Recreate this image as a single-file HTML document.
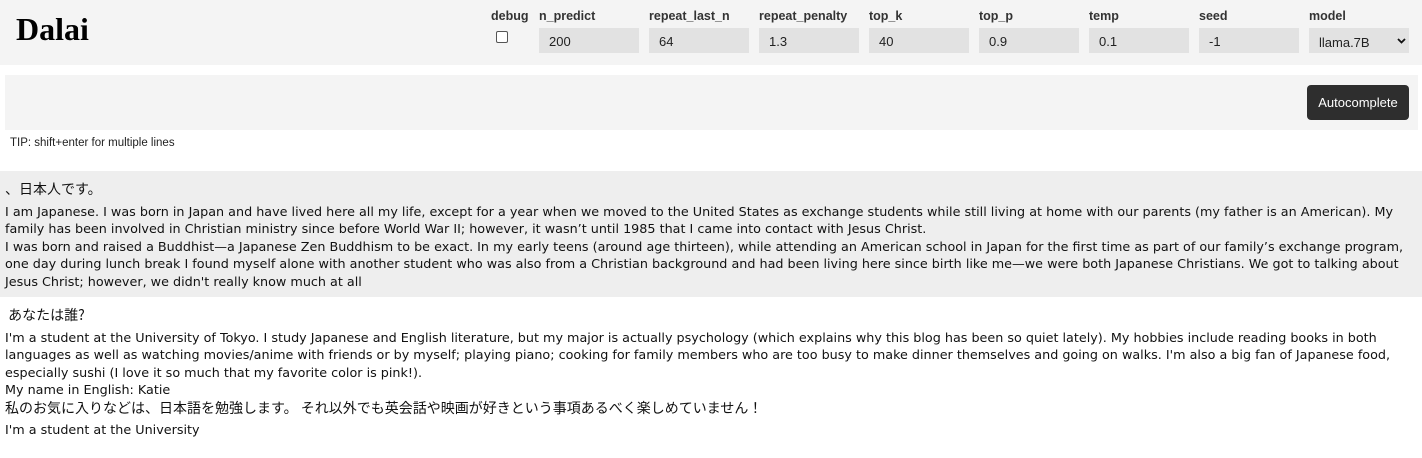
<!DOCTYPE html>
<html><head><meta charset="utf-8"><style>
*{box-sizing:border-box;margin:0;padding:0}
body{width:1422px;height:458px;background:#fff;font-family:"Liberation Sans","Noto Sans CJK JP",sans-serif;color:#111;position:relative;overflow:hidden}
.hdr{position:absolute;left:0;top:0;width:1422px;height:65px;background:#f4f4f4}
.logo{position:absolute;left:16px;top:11px;font-family:"Liberation Serif",serif;font-weight:bold;font-size:32px;color:#000;letter-spacing:0}
.f{position:absolute;top:9px}
.f label{display:block;font-size:12.5px;font-weight:bold;color:#333;height:19px}
.f .in{width:100px;height:25px;background:#e2e2e2;font-size:13px;padding:6px 0 0 10px;color:#222}
.cb{position:absolute;left:496px;top:31px;width:12px;height:12px;border:1px solid #555;border-radius:2px;background:#fff}
.prompt{position:absolute;left:5px;top:75px;width:1413px;height:55px;background:#f4f4f4}
.btn{position:absolute;left:1307px;top:85px;width:102px;height:35px;background:#2e2e2e;border-radius:4px;color:#fff;font-size:13px;text-align:center;line-height:35px}
.tip{position:absolute;left:10px;top:137px;font-size:11.5px;color:#222}
.r{position:absolute;left:0;width:1422px;font-family:"DejaVu Sans","Noto Sans CJK JP",sans-serif;font-size:12.75px;line-height:17.5px;white-space:nowrap;padding-left:5px;color:#111}
.r1{top:171px;height:126px;background:#eee;padding-top:10px}
.r2{top:297px;padding-top:10px}
.j{display:block;margin-bottom:5px;font-family:"Noto Sans CJK JP",sans-serif;font-size:14px}
</style></head><body>
<div class="hdr">
<div class="logo">Dalai</div>
<div class="f" style="left:491px"><label>debug</label></div>
<div class="cb"></div>
<div class="f" style="left:539px"><label>n_predict</label><div class="in">200</div></div>
<div class="f" style="left:649px"><label>repeat_last_n</label><div class="in">64</div></div>
<div class="f" style="left:759px"><label>repeat_penalty</label><div class="in">1.3</div></div>
<div class="f" style="left:869px"><label>top_k</label><div class="in">40</div></div>
<div class="f" style="left:979px"><label>top_p</label><div class="in">0.9</div></div>
<div class="f" style="left:1089px"><label>temp</label><div class="in">0.1</div></div>
<div class="f" style="left:1199px"><label>seed</label><div class="in">-1</div></div>
<div class="f" style="left:1309px"><label>model</label><div class="in" style="padding-top:7px;position:relative">llama.7B <svg style="position:absolute;left:88px;top:10px" width="9" height="6" viewBox="0 0 9 6"><path d="M1 1L4.5 4.5L8 1" stroke="#111" stroke-width="1.8" fill="none"/></svg></div></div>
</div>
<div class="prompt"></div>
<div class="btn">Autocomplete</div>
<div class="tip">TIP: shift+enter for multiple lines</div>
<div class="r r1"><span class="j">、日本人です。</span>I am Japanese. I was born in Japan and have lived here all my life, except for a year when we moved to the United States as exchange students while still living at home with our parents (my father is an American). My<br>family has been involved in Christian ministry since before World War II; however, it wasn’t until 1985 that I came into contact with Jesus Christ.<br>I was born and raised a Buddhist—a Japanese Zen Buddhism to be exact. In my early teens (around age thirteen), while attending an American school in Japan for the first time as part of our family’s exchange program,<br>one day during lunch break I found myself alone with another student who was also from a Christian background and had been living here since birth like me—we were both Japanese Christians. We got to talking about<br>Jesus Christ; however, we didn't really know much at all</div>
<div class="r r2"><span class="j">&nbsp;あなたは誰?</span>I'm a student at the University of Tokyo. I study Japanese and English literature, but my major is actually psychology (which explains why this blog has been so quiet lately). My hobbies include reading books in both<br>languages as well as watching movies/anime with friends or by myself; playing piano; cooking for family members who are too busy to make dinner themselves and going on walks. I'm also a big fan of Japanese food,<br>especially sushi (I love it so much that my favorite color is pink!).<br>My name in English: Katie<br><span class="j">私のお気に入りなどは、日本語を勉強します。 それ以外でも英会話や映画が好きという事項あるべく楽しめていません！</span>I'm a student at the University</div>
</body></html>
